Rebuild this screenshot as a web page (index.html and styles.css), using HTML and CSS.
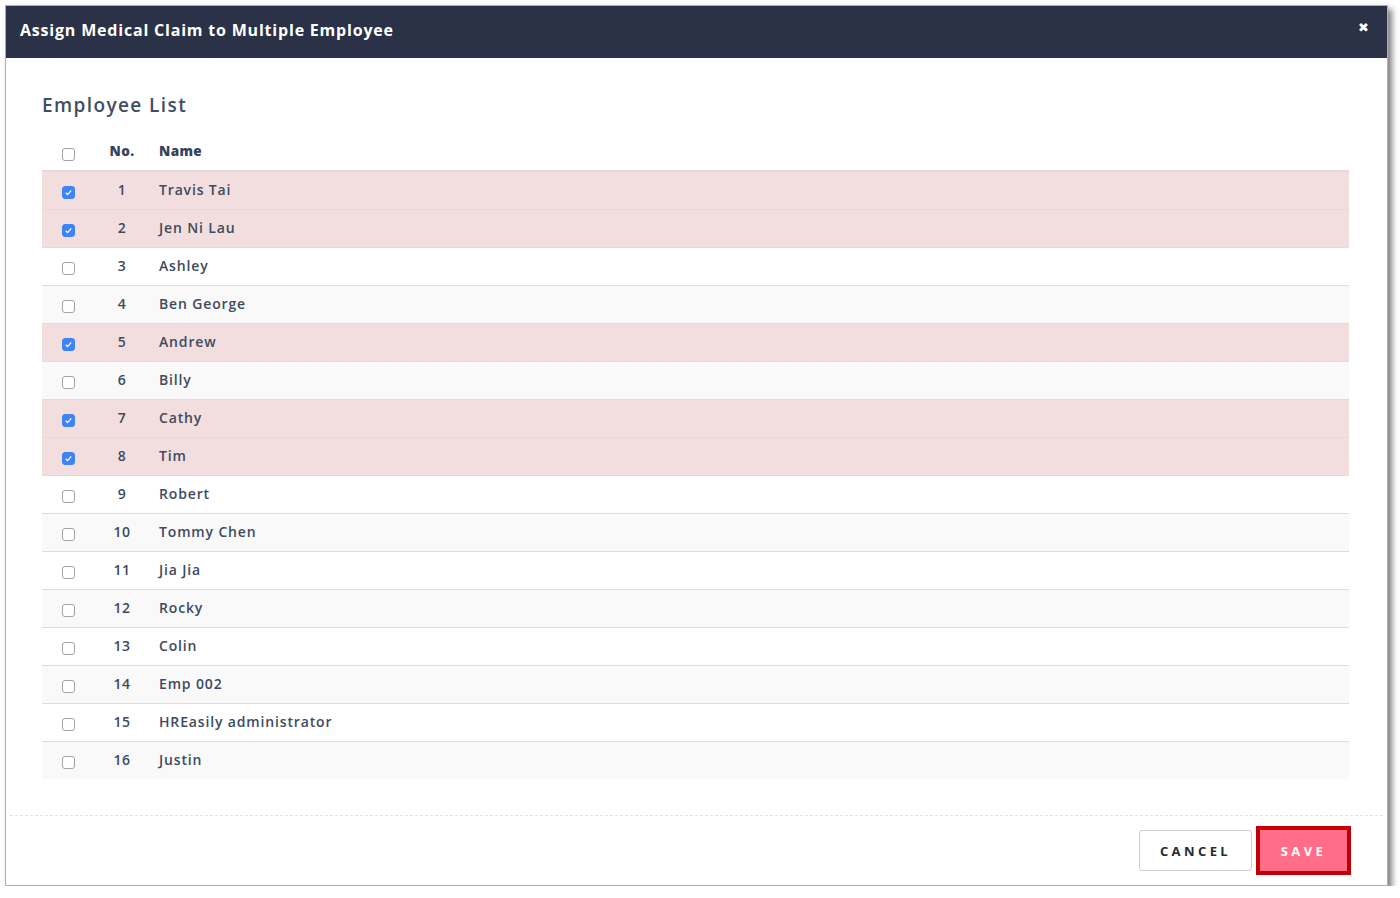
FILE: index.html
```html
<!DOCTYPE html>
<html lang="en">
  <head>
    <meta charset="UTF-8" />
    <title>Assign Medical Claim</title>
    <link rel="stylesheet" href="styles.css">
  </head>
  <body>
    <div class="modal">
      <div class="modal-header">
        <h3>Assign Medical Claim to Multiple Employee</h3>
        <span class="close">&#10006;</span>
      </div>
      <div class="modal-body">
        <h4>Employee List</h4>
        <table class="emp-table">
          <thead>
            <tr>
              <th class="col-check"><span class="cb"></span></th>
              <th class="col-no">No.</th>
              <th>Name</th>
            </tr>
          </thead>
          <tbody>
            <tr class="selected"><td class="col-check"><span class="cb on"><svg viewBox="0 0 12 12"><path d="M3 6.3l2 2 4-4.6" /></svg></span></td><td class="col-no">1</td><td>Travis Tai</td></tr>
            <tr class="selected"><td class="col-check"><span class="cb on"><svg viewBox="0 0 12 12"><path d="M3 6.3l2 2 4-4.6" /></svg></span></td><td class="col-no">2</td><td>Jen Ni Lau</td></tr>
            <tr><td class="col-check"><span class="cb"></span></td><td class="col-no">3</td><td>Ashley</td></tr>
            <tr><td class="col-check"><span class="cb"></span></td><td class="col-no">4</td><td>Ben George</td></tr>
            <tr class="selected"><td class="col-check"><span class="cb on"><svg viewBox="0 0 12 12"><path d="M3 6.3l2 2 4-4.6" /></svg></span></td><td class="col-no">5</td><td>Andrew</td></tr>
            <tr><td class="col-check"><span class="cb"></span></td><td class="col-no">6</td><td>Billy</td></tr>
            <tr class="selected"><td class="col-check"><span class="cb on"><svg viewBox="0 0 12 12"><path d="M3 6.3l2 2 4-4.6" /></svg></span></td><td class="col-no">7</td><td>Cathy</td></tr>
            <tr class="selected"><td class="col-check"><span class="cb on"><svg viewBox="0 0 12 12"><path d="M3 6.3l2 2 4-4.6" /></svg></span></td><td class="col-no">8</td><td>Tim</td></tr>
            <tr><td class="col-check"><span class="cb"></span></td><td class="col-no">9</td><td>Robert</td></tr>
            <tr><td class="col-check"><span class="cb"></span></td><td class="col-no">10</td><td>Tommy Chen</td></tr>
            <tr><td class="col-check"><span class="cb"></span></td><td class="col-no">11</td><td>Jia Jia</td></tr>
            <tr><td class="col-check"><span class="cb"></span></td><td class="col-no">12</td><td>Rocky</td></tr>
            <tr><td class="col-check"><span class="cb"></span></td><td class="col-no">13</td><td>Colin</td></tr>
            <tr><td class="col-check"><span class="cb"></span></td><td class="col-no">14</td><td>Emp 002</td></tr>
            <tr><td class="col-check"><span class="cb"></span></td><td class="col-no">15</td><td>HREasily administrator</td></tr>
            <tr><td class="col-check"><span class="cb"></span></td><td class="col-no">16</td><td>Justin</td></tr>
          </tbody>
        </table>
      </div>
      <div class="modal-footer">
        <button class="btn btn-cancel">Cancel</button>
        <button class="btn btn-save">Save</button>
      </div>
    </div>
  </body>
</html>
```

FILE: styles.css
```css
* {
  margin: 0;
  padding: 0;
  box-sizing: border-box;
}

body {
  background: #fff;
  padding: 5px 0 0 5px;
  font-family: "Open Sans", "Liberation Sans", sans-serif;
  color: #3d4b60;
}

.modal {
  width: 1383px;
  height: 881px;
  background: #fff;
  border: 1px solid #b0b0b0;
  box-shadow: 4px 4px 6px rgba(0, 0, 0, 0.5);
  display: flex;
  flex-direction: column;
}

.modal-header {
  height: 52px;
  background: #2b3147;
  color: #fff;
  display: flex;
  align-items: center;
  justify-content: space-between;
  padding: 0 18px 5px 14px;
}

.modal-header h3 {
  font-size: 16px;
  font-weight: 700;
  letter-spacing: 0.8px;
}

.close {
  font-size: 13px;
  margin-top: -6px;
}

.modal-body {
  padding: 33px 38px 0 36px;
  flex: 1;
}

.modal-body h4 {
  font-size: 19px;
  font-weight: 600;
  letter-spacing: 1.4px;
  color: #3f4e63;
  line-height: 28px;
  margin-bottom: 15px;
}

.emp-table {
  width: 100%;
  border-collapse: collapse;
  font-size: 14px;
}

.emp-table th {
  height: 37px;
  text-align: left;
  font-size: 13.5px;
  font-weight: 800;
  letter-spacing: 0.4px;
  color: #34435a;
  border-bottom: 2px solid #ddd;
  padding-left: 11px;
  padding-bottom: 2px;
  vertical-align: middle;
}

.emp-table td {
  height: 38px;
  border-top: 1px solid #ddd;
  padding-left: 11px;
  padding-bottom: 2px;
  font-weight: 600;
  letter-spacing: 0.85px;
  vertical-align: middle;
}

.emp-table tbody tr:first-child td {
  border-top: none;
}

.emp-table tbody tr:nth-child(even) {
  background: #f9f9f9;
}

.emp-table tbody tr.selected {
  background: #f2dede;
}

.emp-table .col-check {
  width: 54px;
  padding-left: 20px;
  padding-bottom: 0;
}

.emp-table .col-no {
  width: 52px;
  text-align: center;
  padding-left: 0;
  letter-spacing: 0.4px;
}

.cb {
  display: block;
  width: 13px;
  height: 13px;
  margin-top: 4px;
  border: 1px solid #a3a3a3;
  border-radius: 3px;
  background: #fff;
}

.cb.on {
  background: #3e84f7;
  border-color: #3e84f7;
}

.cb svg {
  display: block;
  width: 11px;
  height: 11px;
  fill: none;
  stroke: #fff;
  stroke-width: 1.4;
}

.modal-footer {
  margin: 0 4px;
  height: 70px;
  border-top: 1px dashed #e3e3e3;
  display: flex;
  justify-content: flex-end;
  align-items: center;
  gap: 4px;
  padding-right: 32px;
}

.btn {
  font-family: "Open Sans", "Liberation Sans", sans-serif;
  font-size: 13px;
  font-weight: 700;
  letter-spacing: 3.4px;
  text-transform: uppercase;
  cursor: pointer;
}

.btn-cancel {
  width: 113px;
  height: 41px;
  background: #fff;
  color: #2b2b2b;
  border: 1px solid #cfcfcf;
  border-radius: 3px;
}

.btn-save {
  width: 95px;
  height: 49px;
  background: #ff6e86;
  color: #fff;
  border: 4px solid #c10006;
}
```
